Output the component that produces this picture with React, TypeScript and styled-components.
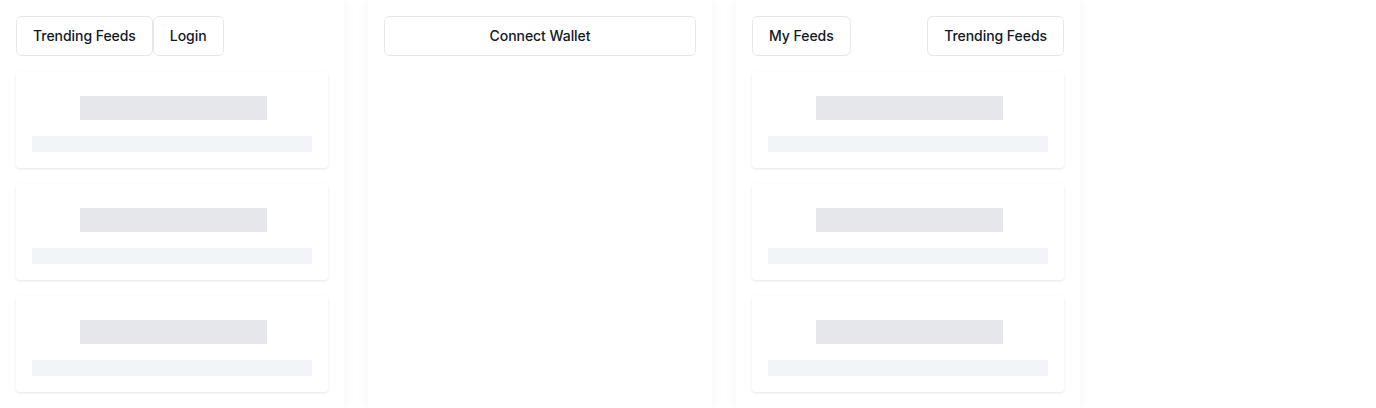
import React from 'react';
import styled, { createGlobalStyle } from 'styled-components';

const GlobalStyle = createGlobalStyle`
  body {
    margin: 0;
    background: #ffffff;
    font-family: Inter, "Noto Sans", sans-serif;
    color: #111827;
  }
`;

const Board = styled.div`
  display: flex;
  gap: 24px;
  height: 100vh;
  min-height: 408px;
`;

const Column = styled.section`
  width: 344px;
  flex-shrink: 0;
  box-sizing: border-box;
  padding: 16px;
  background: #fff;
  box-shadow: 0 0 12px rgba(0, 0, 0, 0.05);
  display: flex;
  flex-direction: column;
  gap: 16px;
  overflow: hidden;
`;

const Toolbar = styled.div<{ spread?: boolean }>`
  display: flex;
  align-items: center;
  justify-content: ${props => (props.spread ? 'space-between' : 'flex-start')};
`;

const Button = styled.button<{ wide?: boolean }>`
  height: 40px;
  padding: 0 16px 2px;
  width: ${props => (props.wide ? '100%' : 'auto')};
  background: #fff;
  border: 1px solid #e5e7eb;
  border-radius: 6px;
  font-family: Inter, "Noto Sans", sans-serif;
  font-size: 14px;
  font-weight: 500;
  letter-spacing: -0.05px;
  color: #111827;
  cursor: pointer;
`;

const Card = styled.div`
  background: #fff;
  border-radius: 3px;
  box-shadow: 0 1px 3px rgba(0, 0, 0, 0.1);
  padding: 24px 16px 16px;
  display: flex;
  flex-direction: column;
  flex-shrink: 0;
`;

const TitleBar = styled.div`
  width: 187px;
  height: 24px;
  margin: 0 0 16px 48px;
  background: #e5e7eb;
`;

const LineBar = styled.div`
  height: 16px;
  background: #f1f4f8;
`;

const SkeletonCard = () => (
  <Card>
    <TitleBar />
    <LineBar />
  </Card>
);

const FeedList = () => (
  <>
    {[0, 1, 2].map(i => (
      <SkeletonCard key={i} />
    ))}
  </>
);

const App = () => {
  return (
    <>
      <GlobalStyle />
      <Board>
        <Column>
          <Toolbar>
            <Button>Trending Feeds</Button>
            <Button>Login</Button>
          </Toolbar>
          <FeedList />
        </Column>
        <Column>
          <Toolbar>
            <Button wide>Connect Wallet</Button>
          </Toolbar>
        </Column>
        <Column>
          <Toolbar spread>
            <Button>My Feeds</Button>
            <Button>Trending Feeds</Button>
          </Toolbar>
          <FeedList />
        </Column>
      </Board>
    </>
  );
};

export default App;
